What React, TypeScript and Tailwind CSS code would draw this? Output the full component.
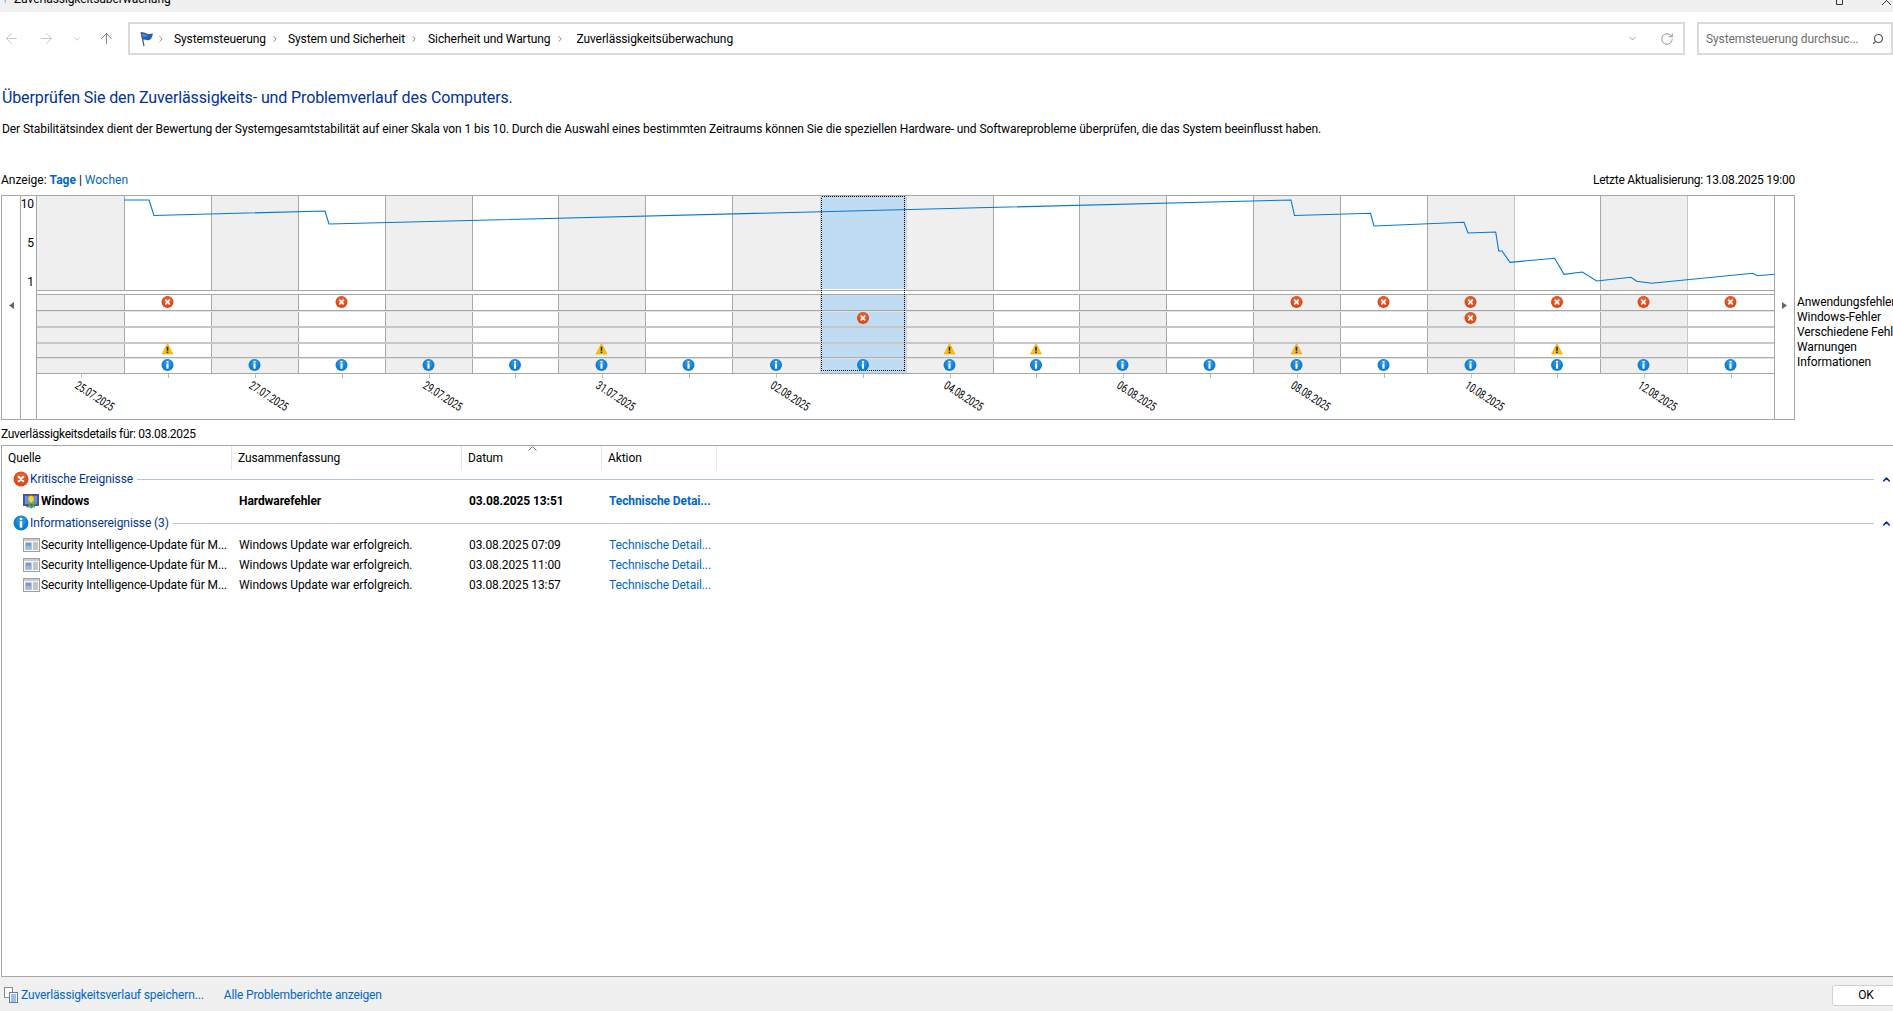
import React from "react";
import { ArrowLeft, ArrowRight, ArrowUp, ChevronDown, ChevronRight, ChevronUp, RotateCw, Search } from "lucide-react";

const F = "[font-family:Roboto,'Liberation_Sans',sans-serif]";

const LINES = [124, 211, 298, 385, 472, 558, 645, 732, 820, 906, 993, 1079, 1166, 1253, 1340, 1427, 1514, 1600, 1687, 1774];
const STARTS = [37, ...LINES];
const center = (i: number) => (STARTS[i] + STARTS[i + 1]) / 2;
const COLS = Array.from({ length: 20 }, (_, i) => i);

const POLY =
  "124,200 149,200 154,215.5 325,211 329,224 1291,200 1294.5,215.5 1370.5,213.3 1374,226 1464,222.3 1468,233 1495.7,232 1498.7,251 1502,251 1510,262.3 1554.7,258.3 1564,274.3 1582.3,272 1596.7,281 1631,277.3 1636.7,281.3 1651.7,283.3 1752.7,273.3 1757.3,275.7 1774,274.3";

const DATES = ["25.07.2025", "27.07.2025", "29.07.2025", "31.07.2025", "02.08.2025", "04.08.2025", "06.08.2025", "08.08.2025", "10.08.2025", "12.08.2025"];

function ErrorMark({ x, y, r = 6 }: { x: number; y: number; r?: number }) {
  const d = r * 0.3;
  return (
    <g>
      <circle cx={x} cy={y} r={r} fill="#dd4b1c" />
      <circle cx={x} cy={y - r * 0.25} r={r * 0.7} fill="#e9622f" opacity="0.7" />
      <path d={`M${x - d} ${y - d}L${x + d} ${y + d}M${x + d} ${y - d}L${x - d} ${y + d}`} stroke="#fff" strokeWidth={r * 0.28} strokeLinecap="round" />
    </g>
  );
}

function InfoMark({ x, y, r = 6 }: { x: number; y: number; r?: number }) {
  return (
    <g>
      <circle cx={x} cy={y} r={r} fill="#0f7fd2" />
      <circle cx={x} cy={y - r * 0.3} r={r * 0.65} fill="#2a97e2" opacity="0.7" />
      <rect x={x - r * 0.17} y={y - r * 0.28} width={r * 0.34} height={r * 0.9} fill="#fff" />
      <rect x={x - r * 0.17} y={y - r * 0.68} width={r * 0.34} height={r * 0.28} fill="#fff" />
    </g>
  );
}

function WarnMark({ x, y }: { x: number; y: number }) {
  return (
    <g>
      <path d={`M${x} ${y - 5.5}L${x + 5.5} ${y + 5}H${x - 5.5}Z`} fill="#fbbe12" stroke="#eaa80a" strokeWidth="0.6" strokeLinejoin="round" />
      <rect x={x - 0.8} y={y - 2.2} width="1.6" height="4" fill="#222" />
      <rect x={x - 0.8} y={y + 2.6} width="1.6" height="1.5" fill="#222" />
    </g>
  );
}

function Chart() {
  return (
    <svg viewBox="37 196 1737 223" className="block h-[223px] w-[1737px] shrink-0">
      {COLS.filter((i) => i % 2 === 0).map((i) => (
        <g key={i} fill="#efefef">
          <rect x={STARTS[i]} y="196" width={STARTS[i + 1] - STARTS[i]} height="94" />
          <rect x={STARTS[i]} y="295" width={STARTS[i + 1] - STARTS[i]} height="78" />
        </g>
      ))}
      <rect x="820" y="196" width="87" height="93" fill="#bfdcf2" />
      <rect x="820" y="295" width="87" height="78" fill="#bfdcf2" />

      <g shapeRendering="crispEdges">
        {LINES.slice(0, -1).map((x, i) => (
          <g key={x} fill={x >= 1427 && i % 2 === 0 ? "#c6c6c6" : x === 820 || x === 906 ? "#d0d0d0" : "#a8a8a8"}>
            <rect x={x} y="196" width="1" height="94" />
            <rect x={x} y="294" width="1" height="79" />
          </g>
        ))}
        <rect x="37" y="290" width="1737" height="1" fill="#a6a6a6" />
        <rect x="37" y="294" width="1737" height="1" fill="#a6a6a6" />
        <rect x="37" y="310" width="1737" height="1" fill="#a6a6a6" />
        <rect x="37" y="311" width="1737" height="1" fill="#e4e4e4" />
        <rect x="37" y="326" width="1737" height="2" fill="#c6c6c6" />
        <rect x="37" y="342" width="1737" height="2" fill="#c8c8c8" />
        <rect x="37" y="357" width="1737" height="1" fill="#adadad" />
        <rect x="37" y="358" width="1737" height="1" fill="#e0e0e0" />
        <rect x="37" y="373" width="1737" height="1" fill="#a6a6a6" />
        {COLS.map((i) => (
          <rect key={i} x={Math.round(center(i))} y="374" width="1" height="4" fill={i % 2 === 0 ? "#c4c4c4" : "#b4b4b4"} />
        ))}
      </g>

      <polyline points={POLY} fill="none" stroke="#0078d7" strokeWidth="1.1" />

      <rect x="821.5" y="196.5" width="83" height="174" fill="none" stroke="#000" strokeWidth="1" strokeDasharray="1 1" shapeRendering="crispEdges" />

      {[1, 3, 14, 15, 16, 17, 18, 19].map((i) => <ErrorMark key={i} x={center(i)} y={302} />)}
      {[9, 16].map((i) => <ErrorMark key={i} x={center(i)} y={318} />)}
      {[1, 6, 10, 11, 14, 17].map((i) => <WarnMark key={i} x={center(i)} y={349} />)}
      {COLS.slice(1).map((i) => <InfoMark key={i} x={center(i)} y={365} />)}

      {DATES.map((d, k) => {
        const x = center(k * 2) - 6.5;
        return (
          <text
            key={d}
            x={x}
            y={387.5}
            transform={`rotate(33 ${x} 387.5)`}
            fontFamily="Roboto, 'Liberation Sans', sans-serif"
            fontSize="12"
            fill="#000"
            textLength="44"
            lengthAdjust="spacingAndGlyphs"
          >
            {d}
          </text>
        );
      })}
    </svg>
  );
}

function FlagIcon({ small = false }: { small?: boolean }) {
  return (
    <svg width={small ? 8 : 16} height={small ? 8 : 16} viewBox="0 0 16 16" className="shrink-0">
      <path d="M2 1l3 14" stroke="#4a5a78" strokeWidth="1.2" />
      <path d="M2 1.5c3-1 5 1.5 7.5 1.5 2 0 3.5-.5 4.5-.5-.5 2-1 3-1.5 4.5-1 2-3 2.5-5 2-1.5-.4-2.5-.7-3.5-.2Z" fill="#2b5bb8" />
      <path d="M3 3c2-.6 4 1.2 6 1.4-1 1.4-3 1.8-5 1.2Z" fill="#5c8ae0" />
    </svg>
  );
}

function WindowsIcon() {
  return (
    <svg width="17" height="17" viewBox="0 0 17 17" className="shrink-0">
      <rect x="0.5" y="1.5" width="15" height="11" fill="#3b5cc4" stroke="#4a4a4a" strokeWidth="0.9" />
      <rect x="2" y="3" width="12" height="8" fill="#6f8ee0" />
      <path d="M3 13h9v1.5H3z" fill="#8a8a8a" />
      <path d="M8 2.5l3 1v3c0 2-1.3 3-3 3.8C6.3 9.5 5 8.5 5 6.5v-3Z" fill="#e9d83a" stroke="#7d7010" strokeWidth="0.5" />
      <path d="M5 11l3 5 6-6.5-1.500-.5L8.200 13 6.800 10.300Z" fill="#3fae3c" />
    </svg>
  );
}

function UpdateIcon() {
  return (
    <svg width="17" height="16" viewBox="0 0 17 16" className="shrink-0">
      <rect x="0.5" y="1.5" width="16" height="13" fill="#f4f6f8" stroke="#a0a0a0" />
      <rect x="1" y="2" width="15" height="2" fill="#c8ccd0" />
      <rect x="2.5" y="5.5" width="6" height="7" fill="#7c9cc8" />
      <rect x="2.5" y="9" width="6" height="3.5" fill="#9fb6d6" />
      <path d="M10 6h5M10 8h5M10 10h5M10 12h5" stroke="#8a95a0" strokeWidth="1" />
    </svg>
  );
}

function FileIcon() {
  return (
    <svg width="16" height="16" viewBox="0 0 16 16" className="shrink-0">
      <rect x="1.5" y="0.5" width="8" height="10" fill="#fff" stroke="#8a8a8a" />
      <rect x="6.5" y="5.5" width="8" height="10" fill="#fff" stroke="#5a7fb5" />
      <path d="M8 8h5M8 10h5M8 12h5M8 14h5" stroke="#3a7fd0" strokeWidth="1" />
    </svg>
  );
}

function GroupRow({ kind, label }: { kind: "error" | "info"; label: string }) {
  return (
    <div className="flex h-[24px] items-center pl-[11px]">
      <svg width="16" height="16" viewBox="0 0 16 16" className="mr-[1px] shrink-0">
        {kind === "error" ? <ErrorMark x={8} y={8} r={7.5} /> : <InfoMark x={8} y={8} r={7.5} />}
      </svg>
      <span className="whitespace-nowrap text-[#003399]">{label}</span>
      <div className="ml-[4px] mr-[7px] h-px flex-1 bg-[#b4c3e1]" />
      <ChevronUp size={11} strokeWidth={3.2} className="mr-[1px] text-[#003399]" />
    </div>
  );
}

function Row({ bold = false, icon, src, sum, date, link }: { bold?: boolean; icon: React.ReactNode; src: string; sum: string; date: string; link: string }) {
  return (
    <div className={`grid h-[20px] grid-cols-[230px_230px_140px_120px] items-center ${bold ? "font-bold" : ""}`}>
      <div className="flex items-center pl-[21px]">
        {icon}
        <span className="ml-[1px] truncate whitespace-nowrap">{src}</span>
      </div>
      <div className="pl-[7px]">{sum}</div>
      <div className="pl-[7px]">{date}</div>
      <div className="pl-[7px] text-[#0066cc]">{link}</div>
    </div>
  );
}

export default function App() {
  return (
    <div className={`flex h-[1011px] w-[1893px] flex-col overflow-hidden bg-white text-[12px] leading-[15px] tracking-[-0.09px] text-black ${F}`}>
      {/* Title bar */}
      <div className="flex h-[12px] shrink-0 items-center overflow-hidden bg-[#f0f0f0] pl-[3px]">
        <div className="relative top-[-7px] flex items-center gap-[3px]">
          <FlagIcon small />
          <span>Zuverlässigkeitsüberwachung</span>
        </div>
        <div className="ml-auto flex items-center gap-[36px] pr-[1px]">
          <svg width="10" height="10" viewBox="0 0 10 10" className="relative top-[-5px]">
            <path d="M0.5 0.5h6v8h-6zM6.5 3h2" fill="none" stroke="#333" />
          </svg>
          <svg width="10" height="10" viewBox="0 0 10 10" className="relative top-[-5px]">
            <path d="M0 0l9 9M9 0l-9 9" fill="none" stroke="#333" />
          </svg>
        </div>
      </div>

      {/* Address row */}
      <div className="mt-[10px] flex h-[33px] shrink-0 items-center">
        <div className="flex w-[128px] items-center text-[#b0b0b0]">
          <ArrowLeft size={17} strokeWidth={1} className="ml-[3px]" />
          <ArrowRight size={17} strokeWidth={1} className="ml-[18px]" />
          <ChevronDown size={10} strokeWidth={1.2} className="ml-[17px] text-[#909090]" />
          <ArrowUp size={17} strokeWidth={1} className="ml-[16px] text-[#555]" />
        </div>
        <div className="flex h-[33px] w-[1557px] items-center border-2 border-[#dadada] pl-[9px]">
          <FlagIcon />
          <ChevronRight size={10} strokeWidth={1.5} className="ml-[1px] text-[#444]" />
          <span className="ml-[8px] pt-[1px]">Systemsteuerung</span>
          <ChevronRight size={10} strokeWidth={1.5} className="ml-[4px] text-[#444]" />
          <span className="ml-[8px] pt-[1px]">System und Sicherheit</span>
          <ChevronRight size={10} strokeWidth={1.5} className="ml-[4px] text-[#444]" />
          <span className="ml-[9px] pt-[1px]">Sicherheit und Wartung</span>
          <ChevronRight size={10} strokeWidth={1.5} className="ml-[5px] text-[#444]" />
          <span className="ml-[11px] pt-[1px]">Zuverlässigkeitsüberwachung</span>
          <ChevronDown size={11} strokeWidth={1.2} className="ml-auto text-[#555]" />
          <RotateCw size={14} strokeWidth={1} className="ml-[22px] mr-[9px] text-[#555]" />
        </div>
        <div className="ml-[12px] flex h-[33px] flex-1 items-center border-2 border-[#dadada] pl-[7px] text-[#6d6d6d]">
          <span className="pt-[1px]">Systemsteuerung durchsuc...</span>
          <Search size={12} strokeWidth={2.4} className="ml-auto mr-[7px] -scale-x-100 text-[#555]" />
        </div>
      </div>

      {/* Intro */}
      <h1 className="mt-[33px] h-[20px] pl-[2px] text-[16px] font-normal leading-[20px] tracking-[-0.12px] text-[#003399]">
        Überprüfen Sie den Zuverlässigkeits- und Problemverlauf des Computers.
      </h1>
      <p className="mt-[14px] pl-[2px]">
        Der Stabilitätsindex dient der Bewertung der Systemgesamtstabilität auf einer Skala von 1 bis 10. Durch die Auswahl eines bestimmten Zeitraums können Sie die speziellen Hardware- und Softwareprobleme überprüfen, die das System beeinflusst haben.
      </p>

      {/* View row */}
      <div className="mt-[36px] flex h-[15px] w-[1795px] justify-between pl-[1px]">
        <div className="tracking-normal">
          Anzeige: <span className="font-bold text-[#0066cc]">Tage</span> | <span className="text-[#0066cc]">Wochen</span>
        </div>
        <div className="tracking-[-0.24px]">Letzte Aktualisierung: 13.08.2025 19:00</div>
      </div>

      {/* Chart frame + legend */}
      <div className="mt-[7px] flex h-[225px] shrink-0">
        <div className="ml-[1px] flex h-[225px] w-[1794px] shrink-0 border border-[#a6a6a6]">
          <div className="flex w-[19px] shrink-0 items-start justify-center border-r border-[#a6a6a6] pt-[106px]">
            <svg width="5" height="7" viewBox="0 0 5 7"><path d="M5 0v7L0 3.5Z" fill="#666" /></svg>
          </div>
          <div className="relative w-[16px] shrink-0 border-r border-[#a6a6a6] text-right">
            <span className="absolute right-[2px] top-[1px]">10</span>
            <span className="absolute right-[2px] top-[40px]">5</span>
            <span className="absolute right-[2px] top-[79px]">1</span>
          </div>
          <Chart />
          <div className="flex flex-1 items-start justify-center border-l border-[#a6a6a6] pt-[106px]">
            <svg width="5" height="7" viewBox="0 0 5 7"><path d="M0 0v7l5-3.5Z" fill="#666" /></svg>
          </div>
        </div>
        <div className="ml-[2px] whitespace-nowrap pt-[100px]">
          <div>Anwendungsfehler</div>
          <div>Windows-Fehler</div>
          <div>Verschiedene Fehler</div>
          <div>Warnungen</div>
          <div>Informationen</div>
        </div>
      </div>

      {/* Details */}
      <div className="mt-[7px] h-[15px] shrink-0 pl-[1px] tracking-[-0.3px]">Zuverlässigkeitsdetails für: 03.08.2025</div>
      <div className="ml-[1px] mt-[3px] min-h-0 flex-1 border-y border-l border-[#a6a6a6]">
        <div className="relative grid h-[24px] grid-cols-[230px_230px_140px_115px_1fr] items-center">
          <div className="h-full border-r border-[#e5e5e5] pl-[6px] leading-[24px]">Quelle</div>
          <div className="h-full border-r border-[#e5e5e5] pl-[6px] leading-[24px]">Zusammenfassung</div>
          <div className="h-full border-r border-[#e5e5e5] pl-[6px] leading-[24px]">Datum</div>
          <div className="h-full border-r border-[#e5e5e5] pl-[6px] leading-[24px]">Aktion</div>
          <svg width="9" height="5" viewBox="0 0 9 5" className="absolute left-[526px] top-[0px]">
            <path d="M0.5 4.5l4-4 4 4" fill="none" stroke="#777" />
          </svg>
        </div>
        <div className="mt-[-3px]">
          <GroupRow kind="error" label="Kritische Ereignisse" />
          <Row bold icon={<WindowsIcon />} src="Windows" sum="Hardwarefehler" date="03.08.2025 13:51" link="Technische Detai..." />
          <GroupRow kind="info" label="Informationsereignisse (3)" />
          <Row icon={<UpdateIcon />} src="Security Intelligence-Update für M..." sum="Windows Update war erfolgreich." date="03.08.2025 07:09" link="Technische Detail..." />
          <Row icon={<UpdateIcon />} src="Security Intelligence-Update für M..." sum="Windows Update war erfolgreich." date="03.08.2025 11:00" link="Technische Detail..." />
          <Row icon={<UpdateIcon />} src="Security Intelligence-Update für M..." sum="Windows Update war erfolgreich." date="03.08.2025 13:57" link="Technische Detail..." />
        </div>
      </div>

      {/* Footer */}
      <div className="flex h-[34px] shrink-0 items-center bg-[#f0f0f0] pl-[3px] pt-[2px] tracking-[-0.14px]">
        <FileIcon />
        <span className="ml-[2px] text-[#0066cc]">Zuverlässigkeitsverlauf speichern...</span>
        <span className="ml-[20px] text-[#0066cc]">Alle Problemberichte anzeigen</span>
        <div className="ml-auto mr-[-7px] flex h-[21px] w-[68px] items-center justify-center rounded-[3px] border border-[#d0d0d0] bg-white">
          OK
        </div>
      </div>
    </div>
  );
}
